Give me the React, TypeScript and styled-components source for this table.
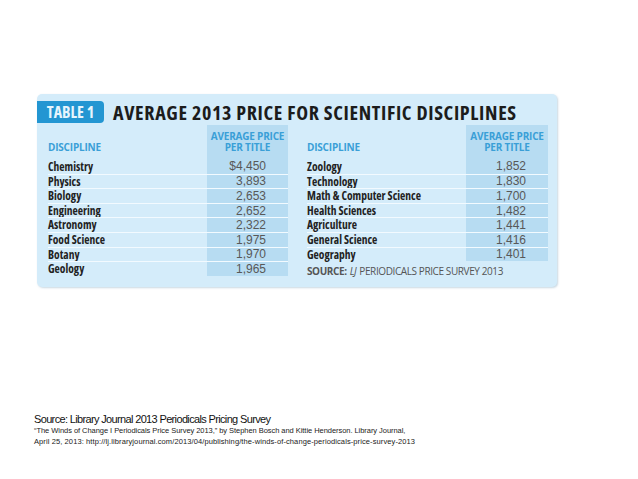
import React from "react";
import styled, { createGlobalStyle } from "styled-components";

const Global = createGlobalStyle`
  html, body { margin: 0; padding: 0; background: #ffffff; }
  body { width: 638px; height: 479px; overflow: hidden; }
`;

const Page = styled.div`
  width: 638px;
  height: 479px;
  display: flex;
  flex-direction: column;
  padding-top: 94px;
  box-sizing: border-box;
`;

const Panel = styled.div`
  margin-left: 37px;
  width: 520px;
  height: 193px;
  background: #d4ecfa;
  border-radius: 5px;
  box-shadow: 1px 1px 2px rgba(150, 180, 200, 0.5);
  display: flex;
  flex-direction: column;
  font-family: "Open Sans", "DejaVu Sans Condensed", sans-serif;
  font-stretch: 75%;
`;

const TitleRow = styled.div`
  display: flex;
  align-items: center;
  margin-top: 7px;
  height: 22px;
`;

const Badge = styled.div`
  width: 67px;
  height: 22px;
  background: #2396d2;
  color: #e6f5fd;
  border-radius: 0 4px 4px 0;
  display: flex;
  align-items: center;
  justify-content: center;
  font-weight: 700;
  font-size: 16px;
  white-space: nowrap;
`;

const Title = styled.div`
  margin-left: 9px;
  color: #1c1c1c;
  font-weight: 700;
  font-size: 20px;
  letter-spacing: 0.65px;
  white-space: nowrap;
`;

const Tables = styled.div`
  display: grid;
  grid-template-columns: 240px 241px;
  column-gap: 19px;
  padding-left: 11px;
  margin-top: 2px;
`;

const Table = styled.div<{ $name: number; $band: number }>`
  display: grid;
  grid-template-columns: ${(p) => p.$name}px ${(p) => p.$band}px;
  grid-template-rows: 34px;
  grid-auto-rows: 14.6px;
  line-height: 1;
`;

const HeadName = styled.div`
  display: flex;
  align-items: flex-end;
  padding-bottom: 6px;
  box-sizing: border-box;
  color: #3a9fd7;
  font-weight: 700;
  font-size: 10px;
  font-stretch: 88%;
  letter-spacing: -0.2px;
  line-height: 11px;
  white-space: nowrap;
`;

const HeadPrice = styled.div`
  background: #b7dcf2;
  display: flex;
  flex-direction: column;
  justify-content: flex-end;
  align-items: center;
  padding-bottom: 6px;
  box-sizing: border-box;
  color: #3a9fd7;
  font-weight: 700;
  font-size: 10px;
  font-stretch: 88%;
  letter-spacing: -0.2px;
  line-height: 11px;
  white-space: nowrap;
`;

const Name = styled.div<{ $first?: boolean }>`
  box-sizing: border-box;
  display: flex;
  align-items: center;
  border-top: ${(p) => (p.$first ? "none" : "1px solid #f2faff")};
  color: #222222;
  font-weight: 700;
  font-size: 11.5px;
  white-space: nowrap;
`;

const Price = styled.div<{ $first?: boolean }>`
  box-sizing: border-box;
  display: flex;
  align-items: center;
  justify-content: flex-end;
  padding-right: 22px;
  background: #b7dcf2;
  border-top: ${(p) => (p.$first ? "none" : "1px solid #f2faff")};
  color: #585858;
  font-size: 12px;
  font-family: "Liberation Sans", Arial, sans-serif;
`;

const SourceRow = styled.div`
  grid-column: 1 / span 2;
  display: flex;
  align-items: center;
  margin-top: 5px;
  color: #555555;
  font-size: 10px;
  font-stretch: 90%;
  letter-spacing: -0.4px;
  white-space: nowrap;
  b { font-weight: 700; margin-right: 3px; }
  i { margin-right: 3px; }
`;

const Footer = styled.div`
  margin-top: 126px;
  margin-left: 34px;
  font-family: "Liberation Sans", Arial, sans-serif;
  color: #111111;
`;

const FooterTitle = styled.div`
  font-size: 11px;
  line-height: 12px;
  letter-spacing: -0.65px;
`;

const FooterLine = styled.div<{ $spacing: number }>`
  font-size: 7.5px;
  line-height: 11px;
  letter-spacing: ${(p) => p.$spacing}px;
  color: #222222;
  white-space: nowrap;
`;

const left: [string, string][] = [
  ["Chemistry", "$4,450"],
  ["Physics", "3,893"],
  ["Biology", "2,653"],
  ["Engineering", "2,652"],
  ["Astronomy", "2,322"],
  ["Food Science", "1,975"],
  ["Botany", "1,970"],
  ["Geology", "1,965"],
];

const right: [string, string][] = [
  ["Zoology", "1,852"],
  ["Technology", "1,830"],
  ["Math & Computer Science", "1,700"],
  ["Health Sciences", "1,482"],
  ["Agriculture", "1,441"],
  ["General Science", "1,416"],
  ["Geography", "1,401"],
];

function Rows({ data }: { data: [string, string][] }) {
  return (
    <>
      {data.map(([n, p], i) => (
        <React.Fragment key={n}>
          <Name $first={i === 0}>{n}</Name>
          <Price $first={i === 0}>{p}</Price>
        </React.Fragment>
      ))}
    </>
  );
}

export default function App() {
  return (
    <>
      <Global />
      <Page>
        <Panel>
          <TitleRow>
            <Badge>TABLE 1</Badge>
            <Title>AVERAGE 2013 PRICE FOR SCIENTIFIC DISCIPLINES</Title>
          </TitleRow>
          <Tables>
            <Table $name={159} $band={81}>
              <HeadName>DISCIPLINE</HeadName>
              <HeadPrice>
                <span>AVERAGE PRICE</span>
                <span>PER TITLE</span>
              </HeadPrice>
              <Rows data={left} />
            </Table>
            <Table $name={159} $band={82}>
              <HeadName>DISCIPLINE</HeadName>
              <HeadPrice>
                <span>AVERAGE PRICE</span>
                <span>PER TITLE</span>
              </HeadPrice>
              <Rows data={right} />
              <SourceRow>
                <b>SOURCE:</b>
                <i>LJ</i>
                PERIODICALS PRICE SURVEY 2013
              </SourceRow>
            </Table>
          </Tables>
        </Panel>
        <Footer>
          <FooterTitle>Source: Library Journal 2013 Periodicals Pricing Survey</FooterTitle>
          <FooterLine $spacing={-0.05}>
            “The Winds of Change I Periodicals Price Survey 2013,” by Stephen Bosch and Kittie Henderson. Library Journal,
          </FooterLine>
          <FooterLine $spacing={0.1}>
            April 25, 2013: http://lj.libraryjournal.com/2013/04/publishing/the-winds-of-change-periodicals-price-survey-2013
          </FooterLine>
        </Footer>
      </Page>
    </>
  );
}
